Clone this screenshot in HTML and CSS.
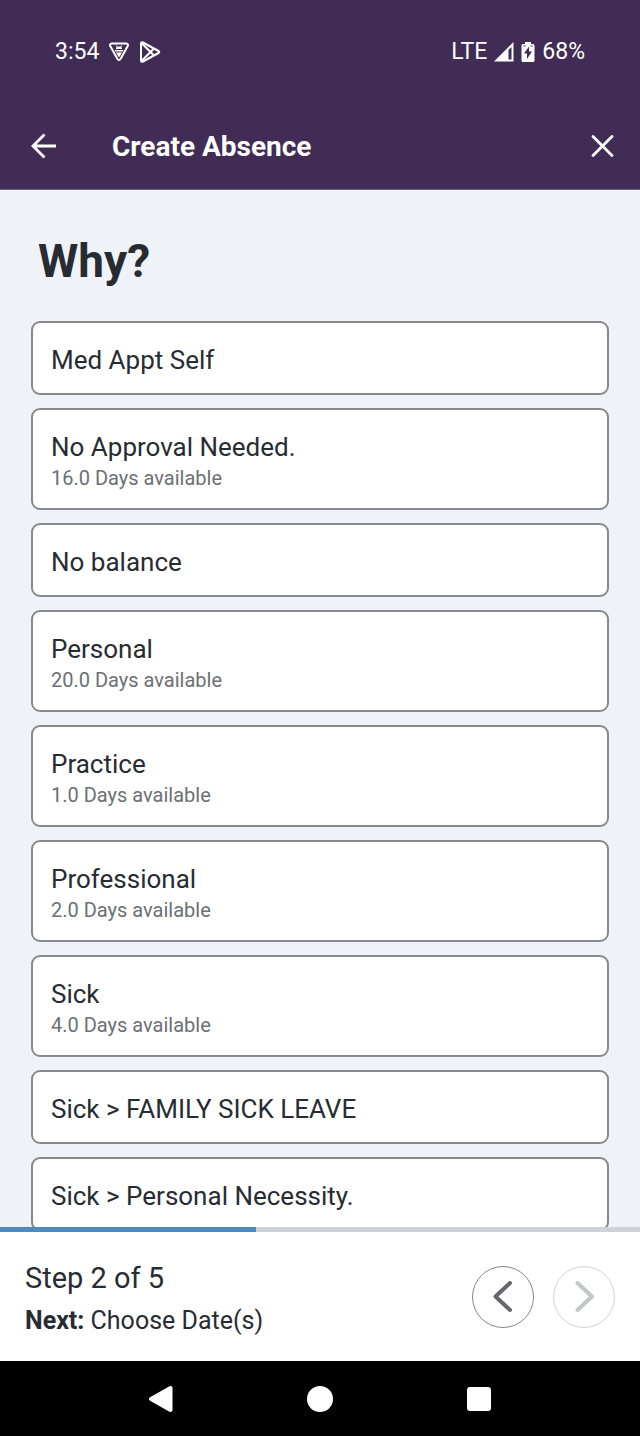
FILE: index.html
```html
<!DOCTYPE html>
<html lang="en">
<head>
    <meta charset="UTF-8">
    <meta name="viewport" content="width=device-width, initial-scale=1.0">
    <title>Create Absence</title>
    <link rel="stylesheet" href="styles.css">
</head>
<body>
    <header class="top">
        <div class="status-bar">
            <div class="status-group">
                <span>3:54</span>
                <svg width="20" height="20" viewBox="0 0 20 20" fill="none" stroke="#fff" stroke-width="2" stroke-linejoin="round">
                    <path d="M3 1.500h14q3 .3 1.500 3L11.500 17q-1.500 2-3 0L1.500 4.500q-1.500-2.700 1.500-3z"/>
                    <path d="M7 6.500q0-2 3-2t3 2v.5H7zM6 8h8v1.500H6zM7 10.500h6l-3 5z" fill="#fff" stroke="none"/>
                    <path d="M7.500 3.500l1 2M12.500 3.500l-1 2" stroke-width="1"/>
                </svg>
                <svg width="22" height="22" viewBox="0 0 22 22" fill="none" stroke="#fff" stroke-width="2" stroke-linejoin="round">
                    <path d="M2 2.500q0-1.800 2-1L19.500 10q1.500 1 0 2L4 20.500q-2 .8-2-1z"/>
                    <path d="M2.500 2L15 14.500M2.500 20L15 7.500"/>
                </svg>
            </div>
            <div class="status-group right">
                <span>LTE</span>
                <svg width="20" height="20" viewBox="0 0 20 20">
                    <path d="M19.500 0v19.500H0z" fill="#fff"/>
                    <path d="M14.500 8l3-3V17.500h-3z" fill="#412c56"/>
                </svg>
                <svg width="14" height="20" viewBox="0 0 14 20">
                    <path d="M4 0h6v2h2q1.500 0 1.500 1.500v15q0 1.500-1.500 1.500H2q-1.500 0-1.500-1.500v-15Q.5 2 2 2h2z" fill="#fff"/>
                    <path d="M8 4.500L3 11.500h3V17l5-7.500H8z" fill="#412c56"/>
                    <path d="M2.500 4h2M9.500 4h2" stroke="#412c56"/>
                </svg>
                <span>68%</span>
            </div>
        </div>
        <div class="app-bar">
            <button class="icon-button" type="button" aria-label="Back">
                <svg width="26" height="26" viewBox="0 0 26 26" fill="none" stroke="#fff" stroke-width="2.800">
                    <path d="M25 13H2M13.500 1.500L2 13l11.500 11.500"/>
                </svg>
            </button>
            <h1>Create Absence</h1>
            <button class="icon-button" type="button" aria-label="Close">
                <svg width="26" height="26" viewBox="0 0 26 26" fill="none" stroke="#fff" stroke-width="2.800" stroke-linecap="round">
                    <path d="M4 3.500l19 19M23 3.500l-19 19"/>
                </svg>
            </button>
        </div>
    </header>

    <main class="content">
        <h2>Why?</h2>
        <div class="reasons">
            <button class="reason" type="button"><span class="name">Med Appt Self</span></button>
            <button class="reason" type="button">
                <span class="name">No Approval Needed.</span>
                <span class="balance">16.0 Days available</span>
            </button>
            <button class="reason" type="button"><span class="name">No balance</span></button>
            <button class="reason" type="button">
                <span class="name">Personal</span>
                <span class="balance">20.0 Days available</span>
            </button>
            <button class="reason" type="button">
                <span class="name">Practice</span>
                <span class="balance">1.0 Days available</span>
            </button>
            <button class="reason" type="button">
                <span class="name">Professional</span>
                <span class="balance">2.0 Days available</span>
            </button>
            <button class="reason" type="button">
                <span class="name">Sick</span>
                <span class="balance">4.0 Days available</span>
            </button>
            <button class="reason" type="button"><span class="name">Sick &gt; FAMILY SICK LEAVE</span></button>
            <button class="reason" type="button"><span class="name">Sick &gt; Personal Necessity.</span></button>
        </div>
    </main>

    <footer>
        <div class="progress"><div class="progress-fill"></div></div>
        <div class="steps">
            <div class="step-text">
                <p class="step">Step 2 of 5</p>
                <p class="next"><strong>Next:</strong> Choose Date(s)</p>
            </div>
            <button class="round" type="button" aria-label="Previous step">
                <svg width="32" height="32" viewBox="0 0 32 32" fill="none" stroke="currentColor" stroke-width="4" stroke-linecap="round" stroke-linejoin="round">
                    <path d="M23 2L8.500 15.500 23 29"/>
                </svg>
            </button>
            <button class="round" type="button" aria-label="Next step" disabled>
                <svg width="32" height="32" viewBox="0 0 32 32" fill="none" stroke="currentColor" stroke-width="4" stroke-linecap="round" stroke-linejoin="round">
                    <path d="M9.500 2L24 15.500 9.500 29"/>
                </svg>
            </button>
        </div>
        <nav class="system-nav">
            <button type="button" aria-label="System back">
                <svg width="26" height="28" viewBox="0 0 26 28" fill="#fff" stroke="#fff" stroke-width="4" stroke-linejoin="round">
                    <path d="M22.500 3v22L3 14z"/>
                </svg>
            </button>
            <button type="button" aria-label="Home">
                <svg width="26" height="28" viewBox="0 0 26 28"><circle cx="13" cy="14" r="13" fill="#fff"/></svg>
            </button>
            <button type="button" aria-label="Recent apps">
                <svg width="26" height="28" viewBox="0 0 26 28"><rect x="1" y="2" width="24" height="24" rx="3" fill="#fff"/></svg>
            </button>
        </nav>
    </footer>
</body>
</html>
```
FILE: styles.css
```css
* {
    box-sizing: border-box;
}
body {
    margin: 0;
    height: 100vh;
    display: flex;
    flex-direction: column;
    overflow: hidden;
    background-color: #eff3f8;
    color: #272c32;
    font-family: Roboto, "Liberation Sans", sans-serif;
}
h1, h2, p {
    margin: 0;
}
button {
    margin: 0;
    padding: 0;
    border: none;
    background: none;
    color: inherit;
    font-family: inherit;
    cursor: pointer;
}
svg {
    display: block;
}
.top {
    flex: none;
    background-color: #412c56;
    color: white;
    border-bottom: 1px solid #6f6080;
}
.status-bar {
    display: flex;
    justify-content: space-between;
    padding: 36px 55px;
    font-size: 23px;
    line-height: 32px;
}
.status-group {
    display: flex;
    align-items: center;
    gap: 10px;
}
.status-group.right {
    gap: 7px;
}
.app-bar {
    display: flex;
    align-items: center;
    padding: 22px 25px 23px 31px;
}
.app-bar h1 {
    flex: 1;
    margin-left: 55px;
    padding-top: 2px;
    font-size: 28px;
    font-weight: 700;
    line-height: 38px;
}
.content {
    flex: 1;
    min-height: 0;
    overflow: hidden;
    padding: 40px 31px 0;
}
.content h2 {
    padding-left: 7px;
    font-size: 46px;
    line-height: 62px;
}
.reasons {
    display: flex;
    flex-direction: column;
    gap: 13px;
    margin-top: 29px;
}
.reason {
    display: flex;
    flex-direction: column;
    padding: 20px 18px 16px;
    border: 2px solid #87898c;
    border-radius: 9px;
    background-color: white;
    text-align: left;
}
.name {
    font-size: 26px;
    line-height: 34px;
}
.balance {
    color: #6c7074;
    font-size: 20px;
    line-height: 28px;
}
footer {
    flex: none;
    background-color: white;
}
.progress {
    height: 5px;
    background-color: #ced2d6;
}
.progress-fill {
    width: 40%;
    height: 100%;
    background-color: #4c8bc1;
}
.steps {
    display: flex;
    align-items: center;
    gap: 19px;
    height: 129px;
    padding: 0 25px;
}
.step-text {
    flex: 1;
    padding-top: 4px;
}
.step {
    font-size: 29px;
    line-height: 44px;
}
.next {
    font-size: 25px;
    line-height: 42px;
}
.round {
    display: flex;
    justify-content: center;
    align-items: center;
    width: 62px;
    height: 62px;
    border: 1px solid #85878a;
    border-radius: 50%;
    color: #64686d;
}
.round:disabled {
    border-color: #d2d4d6;
    color: #c3c5c7;
    cursor: default;
}
.system-nav {
    display: flex;
    justify-content: center;
    align-items: center;
    gap: 133px;
    height: 75px;
    background-color: black;
}
```
